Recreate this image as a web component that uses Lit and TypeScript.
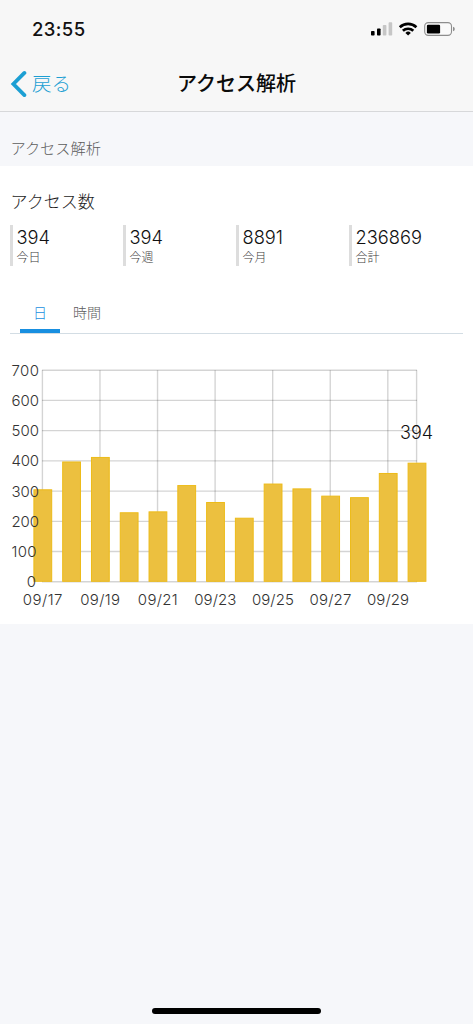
import { LitElement, html, svg, css } from "lit";
import { customElement, property, state } from "lit/decorators.js";

interface Stat {
  value: string;
  label: string;
}

const STATS: Stat[] = [
  { value: "394", label: "今日" },
  { value: "394", label: "今週" },
  { value: "8891", label: "今月" },
  { value: "236869", label: "合計" },
];

const DAILY = [306, 398, 413, 230, 233, 320, 264, 212, 325, 309, 285, 280, 360, 394];
const FIRST_DAY = 17;

@customElement("status-bar")
class StatusBar extends LitElement {
  static styles = css`
    :host {
      display: flex;
      justify-content: space-between;
      align-items: center;
      height: 58px;
      padding: 0 17px 0 32px;
    }
    .time {
      font: 500 18.5px/60px Inter, "Liberation Sans", sans-serif;
      letter-spacing: 0.4px;
      color: #111;
    }
    .icons {
      display: block;
    }
  `;
  render() {
    return html`
      <span class="time">23:55</span>
      <svg class="icons" width="86" height="18" viewBox="370 20 86 18">
        <rect x="371" y="31" width="3.6" height="4.5" rx=".8" fill="#000" />
        <rect x="377" y="28.4" width="3.6" height="7.1" rx=".8" fill="#000" />
        <rect x="382.8" y="25" width="3.6" height="10.5" rx=".8" fill="#c6c6c6" />
        <rect x="388.6" y="22.2" width="3.6" height="13.3" rx=".8" fill="#c6c6c6" />
        <g fill="none" stroke="#000" stroke-width="2.7">
          <path d="M399.8 27.2A12.2 12.2 0 0 1 416.4 27.2" />
          <path d="M402.9 30.8A7.6 7.6 0 0 1 413.3 30.8" />
        </g>
        <path d="M408.1 35.6L405.4 32.9A3.9 3.9 0 0 1 410.8 32.9Z" fill="#000" />
        <rect x="424.7" y="22.6" width="26.8" height="12.8" rx="3.6" fill="#fafafa" stroke="#8d8d8d" stroke-width="1.1" />
        <rect x="426.9" y="24.7" width="13.2" height="8.7" rx="1.2" fill="#000" />
        <path d="M453 26.7Q454.8 27.3 454.8 29T453 31.3Z" fill="#8d8d8d" />
      </svg>
    `;
  }
}

@customElement("nav-header")
class NavHeader extends LitElement {
  static styles = css`
    :host {
      display: grid;
      grid-template-columns: 1fr auto 1fr;
      align-items: center;
      height: 53px;
      border-bottom: 1px solid #d7d8da;
    }
    .back {
      display: flex;
      align-items: center;
      gap: 5px;
      padding: 0 0 2px 10px;
      color: #1c9fd3;
      font-size: 19.5px;
      font-weight: 300;
      line-height: 50px;
    }
    .chevron {
      display: block;
    }
    .title {
      padding-bottom: 2px;
      font-size: 20px;
      font-weight: 500;
      line-height: 50px;
      color: #0b0b0b;
    }
  `;
  render() {
    return html`
      <div class="back">
        <svg class="chevron" width="17" height="28" viewBox="0 0 17 28">
          <path d="M14.4 2.9L3.4 14L14.4 25.1" fill="none" stroke="currentColor" stroke-width="3.8" stroke-linecap="round" />
        </svg>
        <span>戻る</span>
      </div>
      <div class="title">アクセス解析</div>
    `;
  }
}

@customElement("access-chart")
class AccessChart extends LitElement {
  @property({ attribute: false }) values: number[] = [];

  static styles = css`
    :host {
      display: block;
    }
    .plot {
      display: block;
    }
    .axis {
      font: 300 15px Inter, "Liberation Sans", sans-serif;
      fill: #333;
    }
    .callout {
      font: 300 18px Inter, "Liberation Sans", sans-serif;
      fill: #111;
    }
    .grid {
      stroke: #000;
      stroke-opacity: 0.17;
      stroke-width: 1.4;
    }
    .bar {
      fill: #ecc03f;
      stroke: #edbb18;
      stroke-width: 1;
    }
  `;

  private x(i: number) {
    return 42.4 + (i * 374.2) / 13;
  }

  private y(v: number) {
    return 247.8 - v * 0.3023;
  }

  render() {
    const ticks = [0, 100, 200, 300, 400, 500, 600, 700];
    const bottom = this.y(0);
    const last = this.values.length - 1;
    return html`
      <svg class="plot" width="473" height="290" viewBox="0 0 473 290">
        ${ticks.map((t) => svg`<line class="grid" x1="42" x2="417" y1=${this.y(t)} y2=${this.y(t)} />`)}
        ${this.values.map((_, i) =>
          i % 2 === 0 || i === last
            ? svg`<line class="grid" x1=${this.x(i)} x2=${this.x(i)} y1=${this.y(700)} y2=${bottom} />`
            : null
        )}
        ${this.values.map(
          (v, i) => svg`<rect class="bar" x=${this.x(i) - 8.5} y=${this.y(v) + 0.5} width="17.8" height=${bottom - this.y(v) - 1} />`
        )}
        ${ticks.map((t) => {
          const width = t === 0 ? 9 : t === 100 ? 25 : 27.5;
          const left = t === 0 ? 26.7 : 11.5;
          return svg`<text class="axis" x=${left} y=${this.y(t) + 5.6} textLength=${width}>${t}</text>`;
        })}
        ${this.values.map((_, i) =>
          i % 2 === 0
            ? svg`<text class="axis" x=${this.x(i) + 0.2} y="270.5" text-anchor="middle" textLength=${i <= 4 ? 39.8 : 42}>09/${FIRST_DAY + i}</text>`
            : null
        )}
        <text class="callout" x=${this.x(last)} y="105.3" text-anchor="middle">${this.values[last]}</text>
      </svg>
    `;
  }
}

@customElement("app-root")
class AppRoot extends LitElement {
  @state() private tab = "日";

  static styles = css`
    :host {
      display: flex;
      flex-direction: column;
      height: 1024px;
      background: #f6f7fa;
      font-family: Inter, "Noto Sans CJK JP", sans-serif;
      font-weight: 300;
      overflow: hidden;
    }
    .top {
      background: #f7f7f7;
    }
    .section {
      height: 54px;
      padding: 0 10.5px;
      font-size: 15.2px;
      line-height: 73px;
      color: #5c5c5c;
    }
    .card {
      height: 458px;
      background: #fff;
    }
    .heading {
      padding: 21px 10.5px 0;
      font-size: 17px;
      line-height: 30px;
      color: #1c1c1c;
    }
    .stats {
      display: grid;
      grid-template-columns: repeat(4, 113px);
      padding: 8px 10px 0;
    }
    .stat {
      height: 41px;
      box-sizing: border-box;
      padding-left: 3.5px;
      border-left: 3px solid #ddd;
    }
    .value {
      font-size: 18.3px;
      line-height: 25px;
      color: #111;
    }
    .label {
      font-size: 12px;
      line-height: 15px;
      color: #3c3c3c;
    }
    .tabs {
      display: flex;
      height: 41px;
      margin: 26px 10px 0;
      padding-left: 10px;
      border-bottom: 1px solid #d3dde4;
    }
    .tab {
      box-sizing: border-box;
      height: 41px;
      padding: 0 13px;
      border-bottom: 4px solid transparent;
      font-size: 14px;
      line-height: 41px;
      color: #5c5c5c;
    }
    .tab.active {
      border-color: #188fe0;
      color: #188fe0;
    }
    .home {
      width: 169px;
      height: 6px;
      margin: auto auto 10px 152px;
      border-radius: 3px;
      background: #000;
    }
  `;

  render() {
    return html`
      <header class="top">
        <status-bar></status-bar>
        <nav-header></nav-header>
      </header>
      <div class="section">アクセス解析</div>
      <main class="card">
        <div class="heading">アクセス数</div>
        <div class="stats">
          ${STATS.map(
            (s) => html`<div class="stat">
              <div class="value">${s.value}</div>
              <div class="label">${s.label}</div>
            </div>`
          )}
        </div>
        <div class="tabs">
          ${["日", "時間"].map(
            (t) => html`<div class="tab ${t === this.tab ? "active" : ""}" @click=${() => (this.tab = t)}>${t}</div>`
          )}
        </div>
        <access-chart .values=${DAILY}></access-chart>
      </main>
      <div class="home"></div>
    `;
  }
}
